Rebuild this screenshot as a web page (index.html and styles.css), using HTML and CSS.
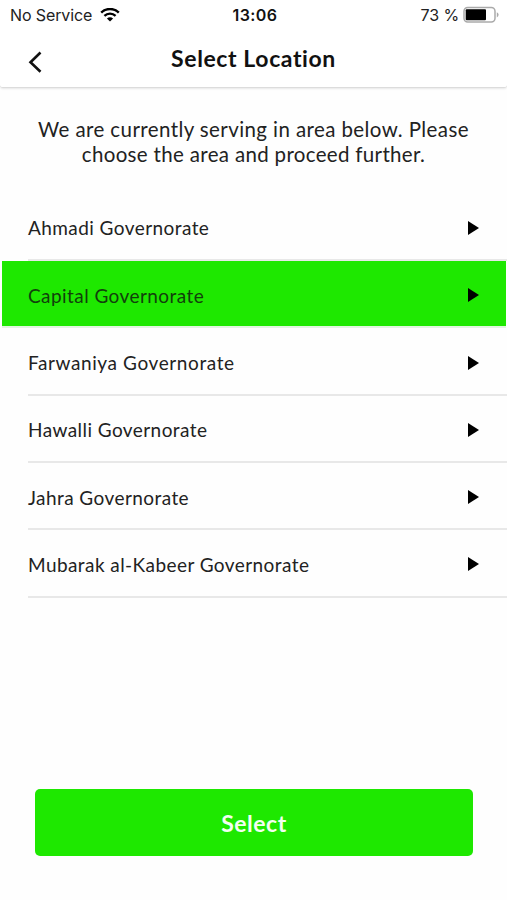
FILE: index.html
```html
<!DOCTYPE html>
<html lang="en">
<head>
<meta charset="utf-8">
<title>Select Location</title>
<link rel="stylesheet" href="styles.css">
</head>
<body>
<header class="top">
  <div class="status">
    <div class="carrier"><span class="service">No Service</span>
      <svg class="wifi" width="20" height="14" viewBox="0 0 20 14" fill="none" stroke="#000"><path d="M1.2 4.6C6-.2 14-.2 18.8 4.6" stroke-width="2.4"/><path d="M4.4 7.9c3.1-3 8.1-3 11.2 0" stroke-width="2.3"/><path d="M10 13.4 6.9 10.4q3.1-2.5 6.2 0Z" fill="#000" stroke="none"/></svg>
    </div>
    <span class="clock">13:06</span>
    <div class="power"><span class="percent">73 %</span>
      <svg class="battery" width="36" height="18" viewBox="0 0 36 18"><rect x="1" y="1.5" width="31" height="14.5" rx="3.7" fill="#fff" stroke="#aaa" stroke-width="1.5"/><rect x="2.7" y="3.2" width="20.3" height="11" rx="1" fill="#000"/><path d="M33.8 6.2q1.8.8 1.8 2.6t-1.8 2.6Z" fill="#aaa"/></svg>
    </div>
  </div>
  <nav class="bar">
    <svg class="back" width="14" height="22" viewBox="0 0 14 22" fill="none" stroke="#111" stroke-width="2.6"><path d="M12.5 1.5 2.5 11.2l10 9.5"/></svg>
    <h1 class="title">Select Location</h1>
  </nav>
</header>
<main class="content">
  <p class="intro"><span class="line-a">We are currently serving in area below. Please</span><br><span class="line-b">choose the area and proceed further.</span></p>
  <ul class="list">
    <li class="row"><span class="name">Ahmadi Governorate</span><svg class="arrow" viewBox="0 0 11 14"><path d="M0 0 11 7 0 14Z"/></svg></li>
    <li class="row selected"><span class="name">Capital Governorate</span><svg class="arrow" viewBox="0 0 11 14"><path d="M0 0 11 7 0 14Z"/></svg></li>
    <li class="row"><span class="name wide">Farwaniya Governorate</span><svg class="arrow" viewBox="0 0 11 14"><path d="M0 0 11 7 0 14Z"/></svg></li>
    <li class="row"><span class="name">Hawalli Governorate</span><svg class="arrow" viewBox="0 0 11 14"><path d="M0 0 11 7 0 14Z"/></svg></li>
    <li class="row"><span class="name">Jahra Governorate</span><svg class="arrow" viewBox="0 0 11 14"><path d="M0 0 11 7 0 14Z"/></svg></li>
    <li class="row"><span class="name">Mubarak al-Kabeer Governorate</span><svg class="arrow" viewBox="0 0 11 14"><path d="M0 0 11 7 0 14Z"/></svg></li>
  </ul>
</main>
<button class="select">Select</button>
</body>
</html>
```
FILE: styles.css
```css
* { box-sizing: border-box; }
body {
  margin: 0;
  height: 900px;
  display: flex;
  flex-direction: column;
  overflow: hidden;
  background: #fefefe;
  color: #222;
  font-family: Lato, "Open Sans", sans-serif;
}
.top {
  height: 88px;
  flex: none;
  background: #fff;
  border-bottom: 1px solid #dcdcdc;
  border-radius: 0 0 3px 3px;
  box-shadow: 0 1px 2px #e8e8e8;
}
.status {
  height: 30px;
  display: grid;
  grid-template-columns: 1fr auto 1fr;
  align-items: center;
  padding: 0 8px 0 10px;
  font: 16px/30px Inter, sans-serif;
}
.carrier, .power { display: flex; align-items: center; }
.carrier { gap: 8px; }
.service { letter-spacing: -.12px; }
.power { justify-content: flex-end; gap: 4px; }
.percent { letter-spacing: -.1px; }
.clock { color: #111; font-weight: 600; letter-spacing: .4px; padding-left: 1px; }
.bar {
  height: 57px;
  display: grid;
  grid-template-columns: 60px 1fr 60px;
  align-items: center;
}
.back { margin: 6px 0 0 28px; }
.title {
  margin: -2px 0 0;
  color: #111;
  font-size: 23px;
  line-height: 30px;
  letter-spacing: .6px;
  text-align: center;
}
.intro {
  margin: 29px 0 0;
  font-size: 20.5px;
  line-height: 25px;
  text-align: center;
  white-space: nowrap;
}
.line-a { letter-spacing: .41px; }
.line-b { letter-spacing: .33px; }
.list { list-style: none; margin: 26.8px 0 0; padding: 0; }
.row {
  height: 67.3px;
  display: flex;
  align-items: center;
  justify-content: space-between;
  margin-left: 28px;
  padding: 3px 28px 0 0;
  border-bottom: 2px solid #e8e8e8;
  font-size: 19px;
}
.name { letter-spacing: .43px; }
.name.wide { letter-spacing: .6px; }
.selected {
  margin: 0 1px 0 2px;
  padding: 3px 27px 0 26px;
  background: #1ee800;
  background-clip: padding-box;
  border-bottom-color: #e2f5df;
  color: #123f0c;
}
.arrow { width: 11px; height: 14px; fill: #000; }
.select {
  width: 438px;
  height: 67px;
  margin: auto 0 44px 35px;
  padding: 0;
  border: 0;
  border-radius: 5px;
  background: #1ee800;
  color: #f3fff1;
  font: bold 23px Lato, sans-serif;
  letter-spacing: .5px;
}
```
